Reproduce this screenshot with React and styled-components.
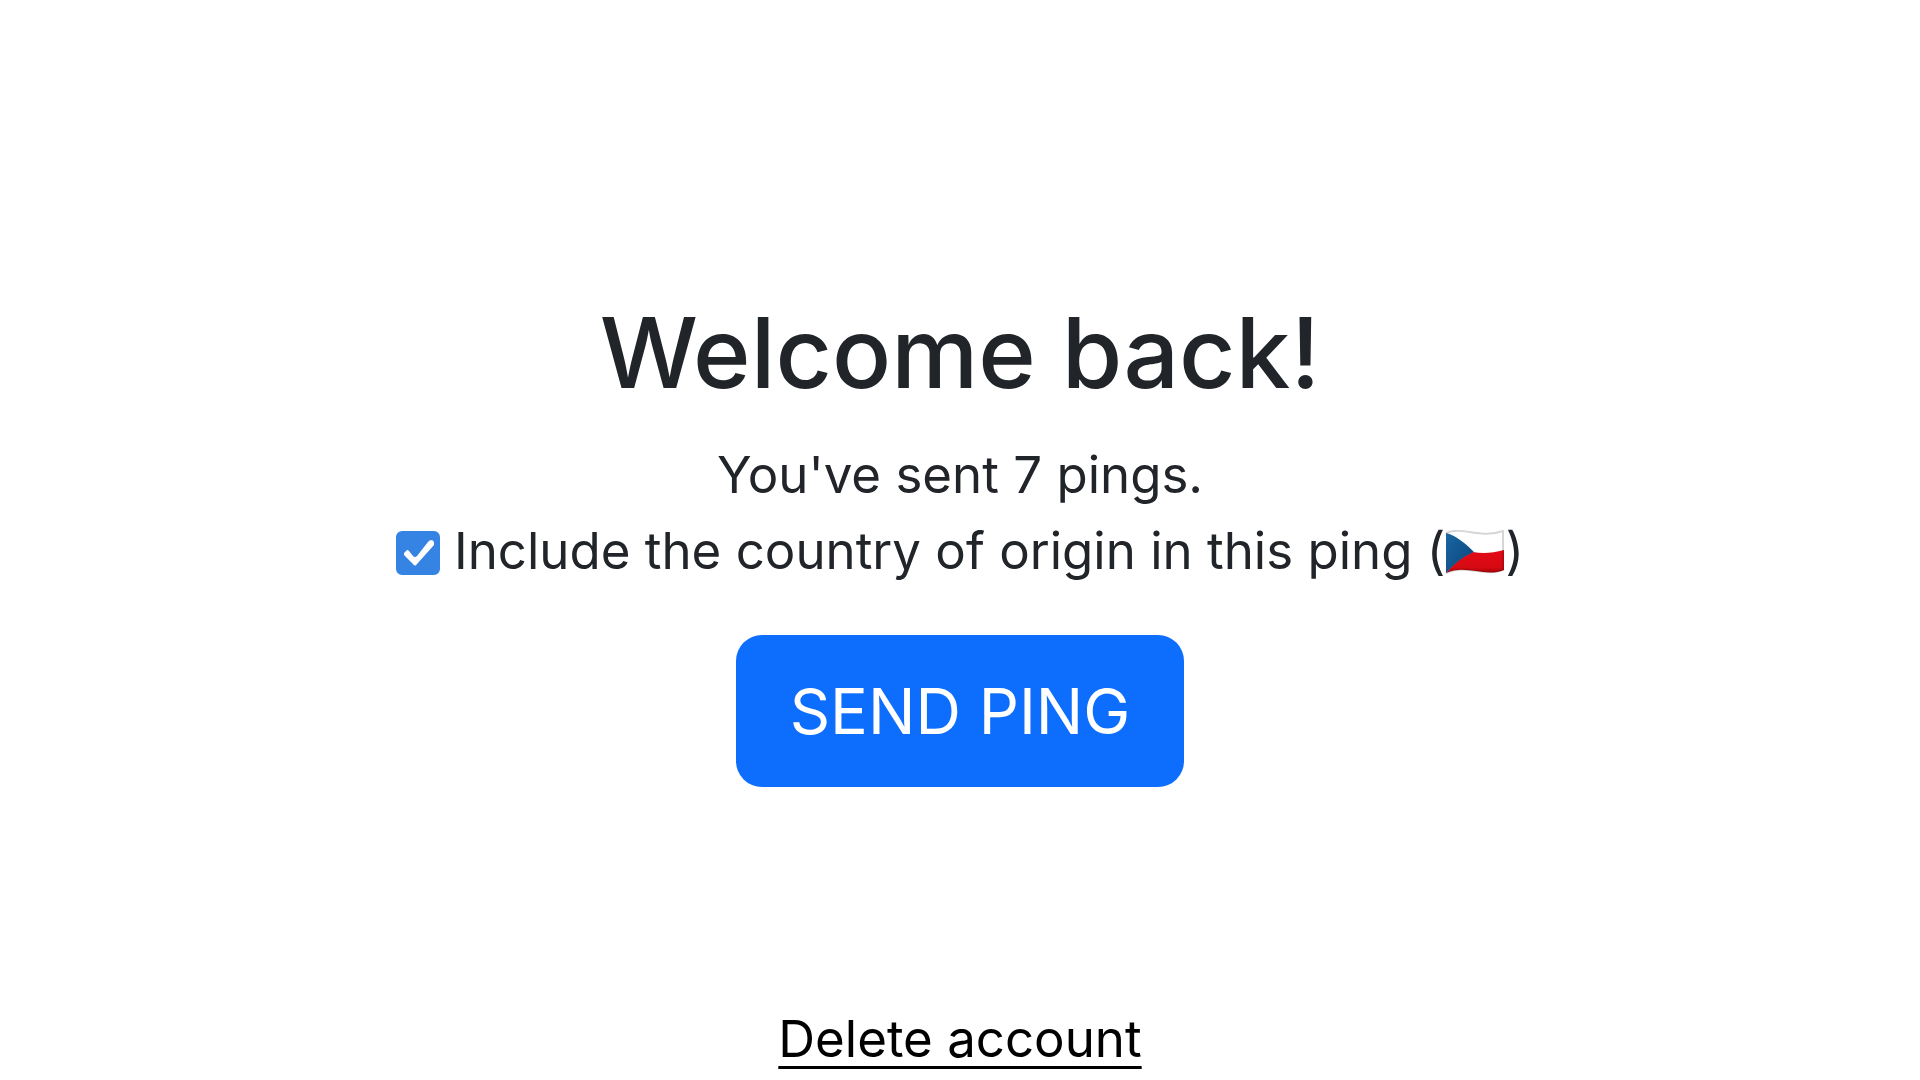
import React, { useState } from 'react';
import { styled, createGlobalStyle } from 'styled-components';

const GlobalStyle = createGlobalStyle`
    *, *::before, *::after {
        box-sizing: border-box;
    }

    body {
        margin: 0;
        background: #fff;
        color: #212529;
        font-family: Inter, "Liberation Sans", sans-serif;
        font-size: 51px;
        line-height: 76px;
    }
`;

const Page = styled.div`
    min-height: 100vh;
    display: grid;
    grid-template-rows: 1fr auto 1fr;
    justify-items: center;
    text-align: center;
`;

const Main = styled.main`
    grid-row: 2;
    display: flex;
    flex-direction: column;
    align-items: center;
`;

const Title = styled.h1`
    margin: 0 0 24px;
    font-size: 98px;
    font-weight: 500;
    line-height: 120px;
`;

const PingCount = styled.p`
    margin: 0;
`;

const CountryOption = styled.label`
    display: flex;
    align-items: center;
    gap: 14px;
    margin-bottom: 46px;
`;

const CheckboxWrapper = styled.span`
    display: grid;
    flex: none;
    margin-top: 4px;

    > * {
        grid-area: 1 / 1;
    }
`;

const Checkbox = styled.input`
    appearance: none;
    width: 44px;
    height: 44px;
    margin: 0;
    border: 3px solid #8f8f9d;
    border-radius: 6px;
    background: #fff;

    &:checked {
        border-color: #3584e4;
        background: #3584e4;
    }
`;

const CheckMark = styled.svg`
    width: 44px;
    height: 44px;
    pointer-events: none;
`;

const FlagIcon = styled.svg`
    width: 60px;
    height: 44px;
    vertical-align: -5px;
`;

const SendButton = styled.button`
    padding: 28px 54px;
    border: 0;
    border-radius: 26px;
    background: #0d6efd;
    color: #fff;
    font-family: inherit;
    font-size: 63px;
    line-height: 96px;
    cursor: pointer;
`;

const Footer = styled.footer`
    grid-row: 3;
    align-self: end;
    padding-bottom: 3px;
`;

const DeleteLink = styled.a`
    color: #000;
    text-decoration: underline;
    text-decoration-thickness: 3px;
    text-underline-offset: 9px;
    text-decoration-skip-ink: none;
`;

const CzechFlag = () => (
    <FlagIcon viewBox="0 0 60 44" role="img" aria-label="Czechia">
        <defs>
            <linearGradient id="flagBlue" x1="0" y1="0" x2="1" y2="1">
                <stop offset="0" stopColor="#1967a3" />
                <stop offset="1" stopColor="#0b4379" />
            </linearGradient>
            <linearGradient id="flagRed" x1="0" y1="0" x2="0" y2="1">
                <stop offset="0" stopColor="#e30a17" />
                <stop offset="0.75" stopColor="#d60a12" />
                <stop offset="1" stopColor="#b00008" />
            </linearGradient>
        </defs>
        <path d="M1 3C17-4 36 9 59 1V40C40 48 21 34 1 43Z" fill="#fff" />
        <path d="M28 22C38 24 48 23 59 20V40C40 48 21 34 1 43C9 33 18 26 28 22Z" fill="url(#flagRed)" />
        <path d="M1 3C12 6 21 14 29 22C19 26 10 33 1 43Z" fill="url(#flagBlue)" />
        <path d="M1 3C17-4 36 9 58 1V40C40 47 21 34 1 43" fill="none" stroke="#000" strokeOpacity="0.16" strokeWidth="2" />
    </FlagIcon>
);

const App = () => {
    const [includeCountry, setIncludeCountry] = useState(true);

    return (
        <>
            <GlobalStyle />
            <Page>
                <Main>
                    <Title>Welcome back!</Title>
                    <PingCount>You've sent 7 pings.</PingCount>
                    <CountryOption htmlFor="includeCountry">
                        <CheckboxWrapper>
                            <Checkbox
                                type="checkbox"
                                id="includeCountry"
                                checked={includeCountry}
                                onChange={(e) => setIncludeCountry(e.target.checked)}
                            />
                            {includeCountry && (
                                <CheckMark viewBox="0 0 44 44" aria-hidden="true">
                                    <path
                                        d="M8 22L11 19Q12 19 13 20L17 25Q19 27 21 25L32 11Q33 9 36 9Q38 10 38 12V14L21 33Q19 36 17 33L8 24Z"
                                        fill="#fff"
                                    />
                                </CheckMark>
                            )}
                        </CheckboxWrapper>
                        <span>Include the country of origin in this ping (<CzechFlag />)</span>
                    </CountryOption>
                    <SendButton type="button">SEND PING</SendButton>
                </Main>
                <Footer>
                    <DeleteLink href="#delete-account">Delete account</DeleteLink>
                </Footer>
            </Page>
        </>
    );
};

export default App;
